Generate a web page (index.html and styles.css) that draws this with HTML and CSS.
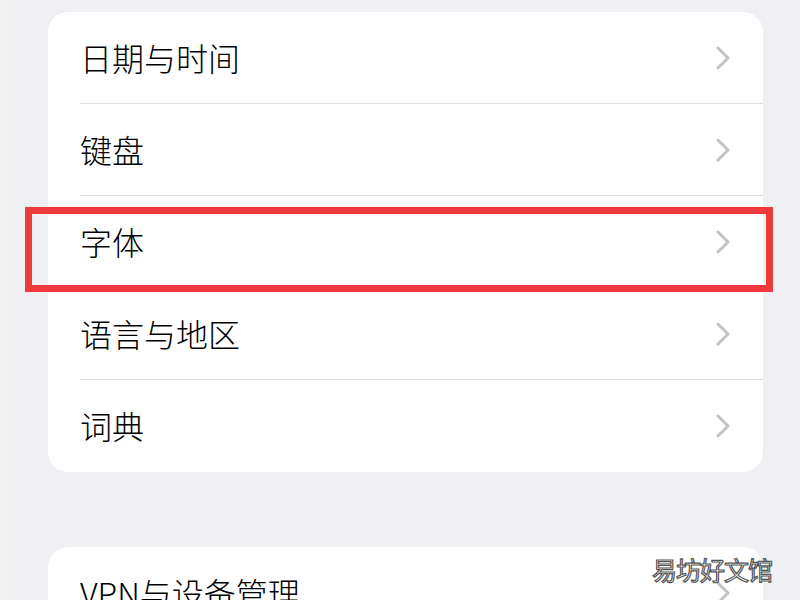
FILE: index.html
```html
<!DOCTYPE html>
<html>
<head>
  <meta charset="UTF-8">
  <meta name="viewport" content="width=device-width, initial-scale=1.0">
  <title>通用</title>
  <link rel="stylesheet" href="styles.css">
</head>
<body>
  <div class="screen">
    <div class="edge"></div>
    <div class="content">
      <ul class="group">
        <li class="row"><span class="label">日期与时间</span><svg class="chev" viewBox="0 0 14 24"><polyline points="2,2 12,12 2,22"/></svg></li>
        <li class="row"><span class="label">键盘</span><svg class="chev" viewBox="0 0 14 24"><polyline points="2,2 12,12 2,22"/></svg></li>
        <li class="row marked"><span class="label">字体</span><svg class="chev" viewBox="0 0 14 24"><polyline points="2,2 12,12 2,22"/></svg></li>
        <li class="row"><span class="label">语言与地区</span><svg class="chev" viewBox="0 0 14 24"><polyline points="2,2 12,12 2,22"/></svg></li>
        <li class="row"><span class="label">词典</span><svg class="chev" viewBox="0 0 14 24"><polyline points="2,2 12,12 2,22"/></svg></li>
      </ul>

      <ul class="group">
        <li class="row"><span class="label">VPN与设备管理</span><svg class="chev" viewBox="0 0 14 24"><polyline points="2,2 12,12 2,22"/></svg></li>
      </ul>
    </div>
  </div>

  <div class="watermark">易坊好文馆</div>
</body>
</html>
```

FILE: styles.css
```css
html, body {
  margin: 0;
  padding: 0;
}
body {
  background-color: #efeff4;
  font-family: "Noto Sans CJK SC", "Noto Sans", sans-serif;
  color: #000;
  overflow: hidden;
  height: 600px;
}
.screen {
  display: flex;
  height: 600px;
}
.edge {
  width: 15px;
  background-color: #f1f1f2;
}
.content {
  flex: 1;
  padding: 12px 37px 0 33px;
  display: flex;
  flex-direction: column;
  gap: 75px;
}
.group {
  list-style: none;
  margin: 0;
  padding: 0 0 0 32px;
  background-color: #fff;
  border-radius: 20px;
}
.row {
  display: flex;
  align-items: center;
  height: 92px;
  padding-right: 33px;
  border-bottom: 1px solid #dfdfe3;
  box-sizing: border-box;
}
.row:last-child {
  border-bottom: none;
}
.label {
  flex: 1;
  font-size: 32px;
  font-weight: 300;
  line-height: 1;
  margin-top: -2px;
}
.chev {
  width: 14px;
  height: 24px;
}
.chev polyline {
  fill: none;
  stroke: #c4c4c7;
  stroke-width: 3;
  stroke-linecap: round;
  stroke-linejoin: round;
}
.marked {
  position: relative;
}
.marked::after {
  content: "";
  position: absolute;
  top: 11px;
  bottom: -5px;
  left: -55px;
  right: -10px;
  border: 7px solid #ee3a3c;
}
.watermark {
  position: absolute;
  left: 652px;
  top: 551px;
  font-size: 25px;
  color: #fff;
  -webkit-text-stroke: 1.2px #555;
  letter-spacing: -1px;
}
```
